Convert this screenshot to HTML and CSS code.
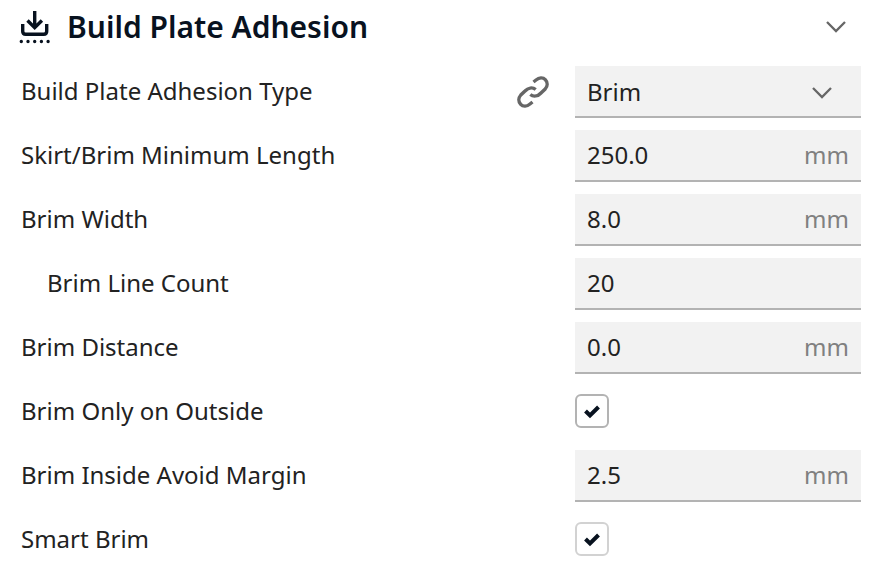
FILE: index.html
```html
<!DOCTYPE html>
<html lang="en">
<head>
  <meta charset="utf-8">
  <title>Build Plate Adhesion</title>
  <link rel="stylesheet" href="styles.css">
</head>
<body>
  <form class="settings">
    <div class="category">
      <svg class="category-icon" viewBox="0 0 32 36" stroke-width="3.4">
        <path d="M3.700 15v7.300q0 3 3 3h18q3 0 3-3v-7.300"/>
        <path d="M15.700 2v16M8.500 11.500l7.200 7.200 7.200-7.200"/>
        <path d="M2.300 32.500h26.900" stroke-linecap="round" stroke-dasharray="0 6.700"/>
      </svg>
      <h1>Build Plate Adhesion</h1>
      <button type="button" class="collapse" aria-label="Collapse category">
        <svg class="chevron" viewBox="0 0 20 12" stroke-width="2.300"><path d="M1 1l9 9 9-9"/></svg>
      </button>
    </div>

    <div class="setting">
      <label for="adhesion-type">Build Plate Adhesion Type</label>
      <svg class="link-icon" viewBox="0 0 32 32" stroke-width="3.400">
        <path d="M16.500 6L19 4C22 1.500 26 1.200 28.300 3.700C30.800 6.300 30.800 10 28.200 13L24 17C21 20.300 16.500 21 13.300 18.500"/>
        <path d="M16.500 6L19 4C22 1.500 26 1.200 28.300 3.700C30.800 6.300 30.800 10 28.200 13L24 17C21 20.300 16.500 21 13.300 18.500" transform="rotate(180 16 16)"/>
      </svg>
      <div class="field">
        <select id="adhesion-type">
          <option>Skirt</option>
          <option selected>Brim</option>
          <option>Raft</option>
          <option>None</option>
        </select>
        <svg class="chevron select-arrow" viewBox="0 0 20 12" stroke-width="2.300"><path d="M1 1l9 9 9-9"/></svg>
      </div>
    </div>

    <div class="setting">
      <label for="min-length">Skirt/Brim Minimum Length</label>
      <div class="field">
        <input type="text" id="min-length" value="250.0">
        <span class="unit">mm</span>
      </div>
    </div>

    <div class="setting">
      <label for="brim-width">Brim Width</label>
      <div class="field">
        <input type="text" id="brim-width" value="8.0">
        <span class="unit">mm</span>
      </div>
    </div>

    <div class="setting child">
      <label for="line-count">Brim Line Count</label>
      <div class="field">
        <input type="text" id="line-count" value="20">
      </div>
    </div>

    <div class="setting">
      <label for="brim-distance">Brim Distance</label>
      <div class="field">
        <input type="text" id="brim-distance" value="0.0">
        <span class="unit">mm</span>
      </div>
    </div>

    <div class="setting">
      <label for="outside-only">Brim Only on Outside</label>
      <div class="check">
        <input type="checkbox" id="outside-only" checked>
        <svg class="tick" viewBox="0 0 16 14" stroke-width="4"><path d="M1.500 7l4.500 4.500 8.500-8.500"/></svg>
      </div>
    </div>

    <div class="setting">
      <label for="avoid-margin">Brim Inside Avoid Margin</label>
      <div class="field">
        <input type="text" id="avoid-margin" value="2.5">
        <span class="unit">mm</span>
      </div>
    </div>

    <div class="setting">
      <label for="smart-brim">Smart Brim</label>
      <div class="check">
        <input type="checkbox" id="smart-brim" class="light" checked>
        <svg class="tick" viewBox="0 0 16 14" stroke-width="4"><path d="M1.500 7l4.500 4.500 8.500-8.500"/></svg>
      </div>
    </div>
  </form>
</body>
</html>
```

FILE: styles.css
```css
* {
  margin: 0;
  padding: 0;
  box-sizing: border-box;
}

body {
  font-family: "Noto Sans", sans-serif;
  font-size: 24px;
  line-height: 32px;
  color: #222222;
  background-color: #ffffff;
}

.settings {
  display: flex;
  flex-direction: column;
  gap: 12px;
  padding: 0 9px 0 19px;
}

.category {
  display: flex;
  align-items: center;
  height: 54px;
}

.category-icon {
  width: 32px;
  height: 36px;
  margin-right: 16px;
  fill: none;
  stroke: #08121f;
}

.category h1 {
  flex: 1;
  font-size: 30px;
  font-weight: 600;
  color: #08121f;
}

.collapse {
  display: flex;
  padding: 8px 15px;
  border: none;
  background: none;
  cursor: pointer;
}

.chevron {
  width: 20px;
  height: 12px;
  fill: none;
  stroke: #666666;
}

.setting {
  display: flex;
  align-items: center;
  height: 52px;
}

.setting label {
  flex: 1;
  padding: 0 0 2px 2px;
}

.child label {
  padding-left: 28px;
}

.link-icon {
  width: 32px;
  height: 32px;
  margin-right: 26px;
  fill: none;
  stroke: #666666;
}

.field,
.check {
  position: relative;
  display: flex;
  align-items: center;
  width: 286px;
}

.field {
  height: 52px;
  padding: 0 12px;
  background-color: #f2f2f2;
  border-bottom: 2px solid #b3b3b3;
}

.check {
  padding-bottom: 2px;
}

.field input,
.field select {
  flex: 1;
  min-width: 0;
  height: 50px;
  border: none;
  outline: none;
  background: none;
  font: inherit;
  color: inherit;
}

.field input {
  padding-bottom: 2px;
}

.field select {
  padding-top: 2px;
  appearance: none;
}

.select-arrow {
  position: absolute;
  top: 21px;
  right: 29px;
  pointer-events: none;
}

.unit {
  color: #808080;
}

.check input {
  appearance: none;
  width: 34px;
  height: 34px;
  border: 2px solid #b3b3b3;
  border-radius: 6px;
  background-color: #ffffff;
}

.check input.light {
  border-color: #d2d2d2;
}

.tick {
  display: none;
  position: absolute;
  left: 9px;
  width: 16px;
  height: 14px;
  fill: none;
  stroke: #08121f;
  overflow: visible;
  pointer-events: none;
}

.check input:checked + .tick {
  display: block;
}
```
